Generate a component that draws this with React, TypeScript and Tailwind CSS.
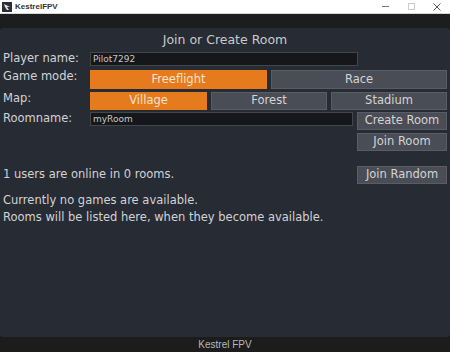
import React from 'react';

const font = { fontFamily: '"DejaVu Sans", "Liberation Sans", sans-serif' };

const Btn = ({ label, active = false, className = '' }: { label: string; active?: boolean; className?: string }) => (
  <div
    className={`flex items-center justify-center text-[11.5px] ${
      active ? 'bg-[#e57b1c] text-[#f3e3d3] border border-[#e57b1c]' : 'bg-[#4a4d55] text-[#d4d4d6] border border-[#5a5d65]'
    } ${className}`}
  >
    {label}
  </div>
);

export default function App() {
  return (
    <div className="w-[450px] h-[352px] flex flex-col bg-[#1c1d1f] overflow-hidden" style={font}>
      {/* Window title bar */}
      <div className="h-[14px] bg-white border-b border-[#d6d6d6] flex items-center relative">
        <svg className="ml-[2px]" width="10" height="10" viewBox="0 0 10 10">
          <rect width="10" height="10" fill="#2a2e36" />
          <path d="M2 2 L8 5 L5 5 L7 8 L5 8 L3 5 Z" fill="#e8e8e8" />
        </svg>
        <span className="ml-[3px] text-[8px] font-bold text-[#333] leading-none" style={{ fontFamily: '"Liberation Sans", sans-serif' }}>
          KestrelFPV
        </span>
        <div className="ml-auto flex items-center h-full">
          <div className="w-[26px] flex justify-center">
            <div className="w-[7px] h-px bg-[#777]" />
          </div>
          <div className="w-[26px] flex justify-center">
            <div className="w-[7px] h-[7px] border border-[#ccc]" />
          </div>
          <div className="w-[26px] flex justify-center">
            <svg width="8" height="8" viewBox="0 0 8 8">
              <path d="M0.5 0.5 L7.5 7.5 M7.5 0.5 L0.5 7.5" stroke="#555" strokeWidth="1" />
            </svg>
          </div>
        </div>
      </div>

      <div className="h-[14px] bg-[#1c1d1f]" />

      {/* Main panel */}
      <div className="flex-1 bg-[#272b33] rounded-[3px] px-[3px] text-[#d2d3d6] text-[11.5px] leading-none">
        <div className="h-[24px] flex items-center justify-center text-[12.5px] text-[#c9cacd]">Join or Create Room</div>

        <div className="flex items-center h-[14px]">
          <div className="w-[87px]">Player name:</div>
          <div className="w-[268px] h-[14px] bg-[#15171b] border border-[#43464c] text-[9px] text-[#c8c8c8] flex items-center px-[2px]">
            Pilot7292
          </div>
        </div>

        <div className="flex items-center h-[19px] mt-[4px]">
          <div className="w-[87px] self-start pt-[1px]">Game mode:</div>
          <div className="flex-1 flex gap-[4px] h-full">
            <Btn label="Freeflight" active className="w-[177px]" />
            <Btn label="Race" className="flex-1" />
          </div>
        </div>

        <div className="flex items-center h-[18px] mt-[3px]">
          <div className="w-[87px] self-start pt-[1px]">Map:</div>
          <div className="flex-1 flex gap-[4px] h-full">
            <Btn label="Village" active className="w-[117px]" />
            <Btn label="Forest" className="w-[116px]" />
            <Btn label="Stadium" className="flex-1" />
          </div>
        </div>

        <div className="flex items-start mt-[2px]">
          <div className="w-[87px] h-[14px] flex items-center">Roomname:</div>
          <div className="w-[263px] h-[14px] bg-[#15171b] border border-[#43464c] text-[9px] text-[#c8c8c8] flex items-center px-[2px]">
            myRoom
          </div>
          <div className="flex-1 ml-[4px] flex flex-col gap-[3px]">
            <Btn label="Create Room" className="h-[18px]" />
            <Btn label="Join Room" className="h-[18px]" />
          </div>
        </div>

        <div className="flex items-center mt-[15px] h-[18px]">
          <div className="flex-1">1 users are online in 0 rooms.</div>
          <Btn label="Join Random" className="h-[18px] w-[90px]" />
        </div>

        <div className="mt-[11px]">Currently no games are available.</div>
        <div className="mt-[5px]">Rooms will be listed here, when they become available.</div>
      </div>

      {/* Footer */}
      <div className="h-[15px] bg-[#1c1c1c] flex items-center justify-center text-[10px] text-[#b8b8b8]" style={{ fontFamily: '"Liberation Sans", sans-serif' }}>
        Kestrel FPV
      </div>
    </div>
  );
}
